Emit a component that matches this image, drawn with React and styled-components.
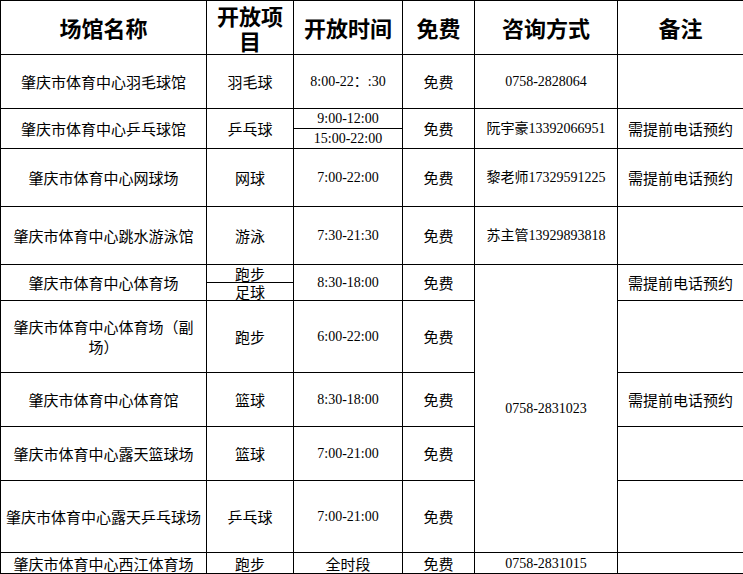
import React from "react";
import styled, { createGlobalStyle } from "styled-components";

const GlobalStyle = createGlobalStyle`
  html, body {
    margin: 0;
    padding: 0;
    background: #ffffff;
  }
`;

const Table = styled.table`
  width: 743px;
  border-collapse: collapse;
  table-layout: fixed;
  font-family: "Liberation Serif", "Noto Sans CJK SC", serif;
  font-size: 14px;
  color: #000000;
`;

const HeadCell = styled.th`
  border: 1px solid #000000;
  font-family: "Noto Sans CJK SC", sans-serif;
  font-weight: 700;
  font-size: 22px;
  line-height: 25px;
  padding: 0 3px;
  text-align: center;
  vertical-align: middle;
`;

const Row = styled.tr`
  height: ${(p) => p.$h}px;
`;

const Cell = styled.td`
  border: 1px solid #000000;
  padding: 0 ${(p) => (p.$nowrap ? 0 : 3)}px;
  text-align: center;
  vertical-align: middle;
  line-height: ${(p) => (p.$tight ? "15px" : "20px")};
  font-size: ${(p) => (p.$cjk ? "15px" : "14px")};
  font-family: ${(p) =>
    p.$cjk
      ? `"Noto Sans CJK SC", sans-serif`
      : `"Liberation Serif", "Noto Sans CJK SC", serif`};
  white-space: ${(p) => (p.$nowrap ? "nowrap" : "normal")};
`;

const columns = [206, 87, 109, 72, 143, 126];

const Note = "需提前电话预约";

const App = () => {
  return (
    <>
      <GlobalStyle />
      <Table>
        <colgroup>
          {columns.map((w, i) => (
            <col key={i} style={{ width: w }} />
          ))}
        </colgroup>
        <thead>
          <Row $h={54}>
            <HeadCell>场馆名称</HeadCell>
            <HeadCell>开放项目</HeadCell>
            <HeadCell>开放时间</HeadCell>
            <HeadCell>免费</HeadCell>
            <HeadCell>咨询方式</HeadCell>
            <HeadCell>备注</HeadCell>
          </Row>
        </thead>
        <tbody>
          <Row $h={54}>
            <Cell $cjk>肇庆市体育中心羽毛球馆</Cell>
            <Cell $cjk>羽毛球</Cell>
            <Cell>8:00-22：:30</Cell>
            <Cell $cjk>免费</Cell>
            <Cell>0758-2828064</Cell>
            <Cell />
          </Row>

          <Row $h={20}>
            <Cell $cjk rowSpan={2}>肇庆市体育中心乒乓球馆</Cell>
            <Cell $cjk rowSpan={2}>乒乓球</Cell>
            <Cell $tight>9:00-12:00</Cell>
            <Cell $cjk rowSpan={2}>免费</Cell>
            <Cell rowSpan={2} $nowrap>阮宇豪13392066951</Cell>
            <Cell $cjk rowSpan={2}>{Note}</Cell>
          </Row>
          <Row $h={20}>
            <Cell $tight>15:00-22:00</Cell>
          </Row>

          <Row $h={58}>
            <Cell $cjk>肇庆市体育中心网球场</Cell>
            <Cell $cjk>网球</Cell>
            <Cell>7:00-22:00</Cell>
            <Cell $cjk>免费</Cell>
            <Cell $nowrap>黎老师17329591225</Cell>
            <Cell $cjk>{Note}</Cell>
          </Row>

          <Row $h={58}>
            <Cell $cjk>肇庆市体育中心跳水游泳馆</Cell>
            <Cell $cjk>游泳</Cell>
            <Cell>7:30-21:30</Cell>
            <Cell $cjk>免费</Cell>
            <Cell $nowrap>苏主管13929893818</Cell>
            <Cell />
          </Row>

          <Row $h={18}>
            <Cell $cjk rowSpan={2}>肇庆市体育中心体育场</Cell>
            <Cell $cjk $tight>跑步</Cell>
            <Cell rowSpan={2}>8:30-18:00</Cell>
            <Cell $cjk rowSpan={2}>免费</Cell>
            <Cell rowSpan={6}>0758-2831023</Cell>
            <Cell $cjk rowSpan={2}>{Note}</Cell>
          </Row>
          <Row $h={18}>
            <Cell $cjk $tight>足球</Cell>
          </Row>

          <Row $h={72}>
            <Cell $cjk>肇庆市体育中心体育场（副场）</Cell>
            <Cell $cjk>跑步</Cell>
            <Cell>6:00-22:00</Cell>
            <Cell $cjk>免费</Cell>
            <Cell />
          </Row>

          <Row $h={54}>
            <Cell $cjk>肇庆市体育中心体育馆</Cell>
            <Cell $cjk>篮球</Cell>
            <Cell>8:30-18:00</Cell>
            <Cell $cjk>免费</Cell>
            <Cell $cjk>{Note}</Cell>
          </Row>

          <Row $h={54}>
            <Cell $cjk>肇庆市体育中心露天篮球场</Cell>
            <Cell $cjk>篮球</Cell>
            <Cell>7:00-21:00</Cell>
            <Cell $cjk>免费</Cell>
            <Cell />
          </Row>

          <Row $h={72}>
            <Cell $cjk $nowrap>肇庆市体育中心露天乒乓球场</Cell>
            <Cell $cjk>乒乓球</Cell>
            <Cell>7:00-21:00</Cell>
            <Cell $cjk>免费</Cell>
            <Cell />
          </Row>

          <Row $h={21}>
            <Cell $cjk $tight>肇庆市体育中心西江体育场</Cell>
            <Cell $cjk $tight>跑步</Cell>
            <Cell $cjk $tight>全时段</Cell>
            <Cell $cjk $tight>免费</Cell>
            <Cell $tight>0758-2831015</Cell>
            <Cell />
          </Row>
        </tbody>
      </Table>
    </>
  );
};

export default App;
